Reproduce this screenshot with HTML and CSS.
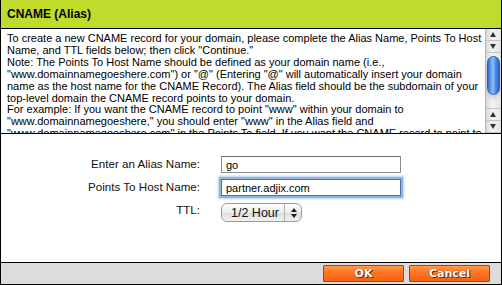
FILE: index.html
```html
<!DOCTYPE html>
<html lang="en">
<head>
  <meta charset="UTF-8" />
  <title>CNAME (Alias)</title>
  <link rel="stylesheet" href="styles.css">
</head>
<body>
  <div class="dialog">
    <div class="dialog-header">CNAME (Alias)</div>

    <div class="help">
      <div class="help-text">
        To create a new CNAME record for your domain, please complete the Alias Name, Points To Host Name, and TTL fields below; then click "Continue."<br>
        Note: The Points To Host Name should be defined as your domain name (i.e., "www.domainnamegoeshere.com") or "@" (Entering "@" will automatically insert your domain name as the host name for the CNAME Record). The Alias field should be the subdomain of your top-level domain the CNAME record points to your domain.<br>
        For example: If you want the CNAME record to point "www" within your domain to "www.domainnamegoeshere," you should enter "www" in the Alias field and "www.domainnamegoeshere.com" in the Points To field. If you want the CNAME record to point to another host, enter that host name in the Points To field.
      </div>
      <div class="scrollbar">
        <span class="sb-btn up"></span>
        <span class="sb-btn down"></span>
        <span class="sb-track">
          <span class="sb-thumb"></span>
        </span>
        <span class="sb-btn up"></span>
        <span class="sb-btn down"></span>
      </div>
    </div>

    <form class="record-form">
      <label for="alias">Enter an Alias Name:</label>
      <input type="text" id="alias" value="go" />

      <label for="host">Points To Host Name:</label>
      <input type="text" id="host" class="focused" value="partner.adjix.com" />

      <label for="ttl">TTL:</label>
      <div class="select-wrap">
        <select id="ttl">
          <option>1/2 Hour</option>
          <option>1 Hour</option>
          <option>1 Day</option>
        </select>
        <span class="select-arrows"></span>
      </div>
    </form>

    <div class="dialog-footer">
      <button type="button" class="btn">OK</button>
      <button type="button" class="btn">Cancel</button>
    </div>
  </div>
</body>
</html>
```

FILE: styles.css
```css
body {
  margin: 0;
  font-family: "Liberation Sans", Arial, sans-serif;
  font-size: 12px;
  color: #000;
  background: #fff;
}

.dialog {
  width: 502px;
  height: 285px;
  box-sizing: border-box;
  border: 1px solid #000;
  border-top: none;
  display: flex;
  flex-direction: column;
}

.dialog-header {
  height: 28px;
  line-height: 28px;
  padding-left: 6px;
  background: #c0db2c;
  border-bottom: 1px solid #000;
  font-weight: bold;
  font-size: 12px;
}

.help {
  height: 104px;
  display: flex;
  border-bottom: 1px solid #000;
  overflow: hidden;
}

.help-text {
  flex: 1;
  padding: 4px 2px 0 6px;
  line-height: 11.9px;
  font-size: 11px;
  overflow: hidden;
}

/* fake aqua scrollbar */
.scrollbar {
  width: 15px;
  display: flex;
  flex-direction: column;
  background: linear-gradient(to right, #d8d8d8, #f4f4f4 40%, #e6e6e6);
  border-left: 1px solid #b8b8b8;
}

.sb-btn {
  height: 11px;
  position: relative;
  border-bottom: 1px solid #c4c4c4;
}

.sb-btn::after {
  content: '';
  position: absolute;
  left: 4px;
  top: 3px;
  border-left: 3.5px solid transparent;
  border-right: 3.5px solid transparent;
}

.sb-btn.up::after { border-bottom: 5px solid #333; }
.sb-btn.down::after { border-top: 5px solid #333; }

.sb-track {
  flex: 1;
  padding: 3px 1px 0;
  border-bottom: 1px solid #c4c4c4;
}

.sb-thumb {
  display: block;
  height: 37px;
  border-radius: 7px;
  border: 1px solid #2c5fb8;
  background: linear-gradient(to right, #2f6fd6, #8fc0f6 45%, #4a8ae4 70%, #2b63c4);
  box-shadow: 0 4px 4px rgba(0, 0, 0, 0.12);
}

.record-form {
  flex: 1;
  display: grid;
  grid-template-columns: 199px 180px;
  column-gap: 21px;
  row-gap: 6px;
  align-content: start;
  padding-top: 22px;
  border-bottom: 1px solid #000;
}

.record-form label {
  text-align: right;
  font-size: 11.6px;
  line-height: 15px;
  color: #111;
}

.record-form input {
  width: 180px;
  height: 17px;
  box-sizing: border-box;
  border: 1px solid #8c8c8c;
  border-top-color: #6e6e6e;
  padding: 0 4px;
  font-family: inherit;
  font-size: 11px;
  color: #000;
}

.record-form input.focused {
  border-color: #4f6f9f;
  box-shadow: 0 0 0 2px #8fb4e6, 0 0 2px 3px rgba(120, 160, 220, 0.5);
  outline: none;
}

.select-wrap {
  position: relative;
  width: 81px;
  height: 19px;
  margin-top: 1px;
}

.select-wrap select {
  appearance: none;
  -webkit-appearance: none;
  width: 81px;
  height: 19px;
  border: 1px solid #9a9a9a;
  border-radius: 6px;
  padding: 0 0 0 9px;
  font-family: inherit;
  font-size: 12.5px;
  color: #111;
  background: linear-gradient(#ffffff, #ececec 50%, #dcdcdc 51%, #f2f2f2);
}

.select-arrows {
  position: absolute;
  right: 0;
  top: 1px;
  width: 17px;
  height: 17px;
  border-left: 1px solid #b4b4b4;
  pointer-events: none;
}

.select-arrows::before,
.select-arrows::after {
  content: '';
  position: absolute;
  left: 6px;
  border-left: 3px solid transparent;
  border-right: 3px solid transparent;
}

.select-arrows::before { top: 4px; border-bottom: 4px solid #222; }
.select-arrows::after { top: 10px; border-top: 4px solid #222; }

.dialog-footer {
  height: 21px;
  background: #dcdcdc;
  display: flex;
  justify-content: flex-end;
  align-items: center;
  gap: 5px;
  padding-right: 11px;
}

.btn {
  width: 81px;
  height: 17px;
  padding: 0;
  border: 1px solid #9b4a14;
  border-radius: 1px;
  background: linear-gradient(#ff9a4a, #ff7424 45%, #f4600e);
  color: #fff;
  font-family: "DejaVu Sans", Verdana, sans-serif;
  font-weight: bold;
  font-size: 11px;
  text-shadow: 0 0 1px #5a2600, 1px 1px 0 #6a3000;
  cursor: pointer;
}
```
